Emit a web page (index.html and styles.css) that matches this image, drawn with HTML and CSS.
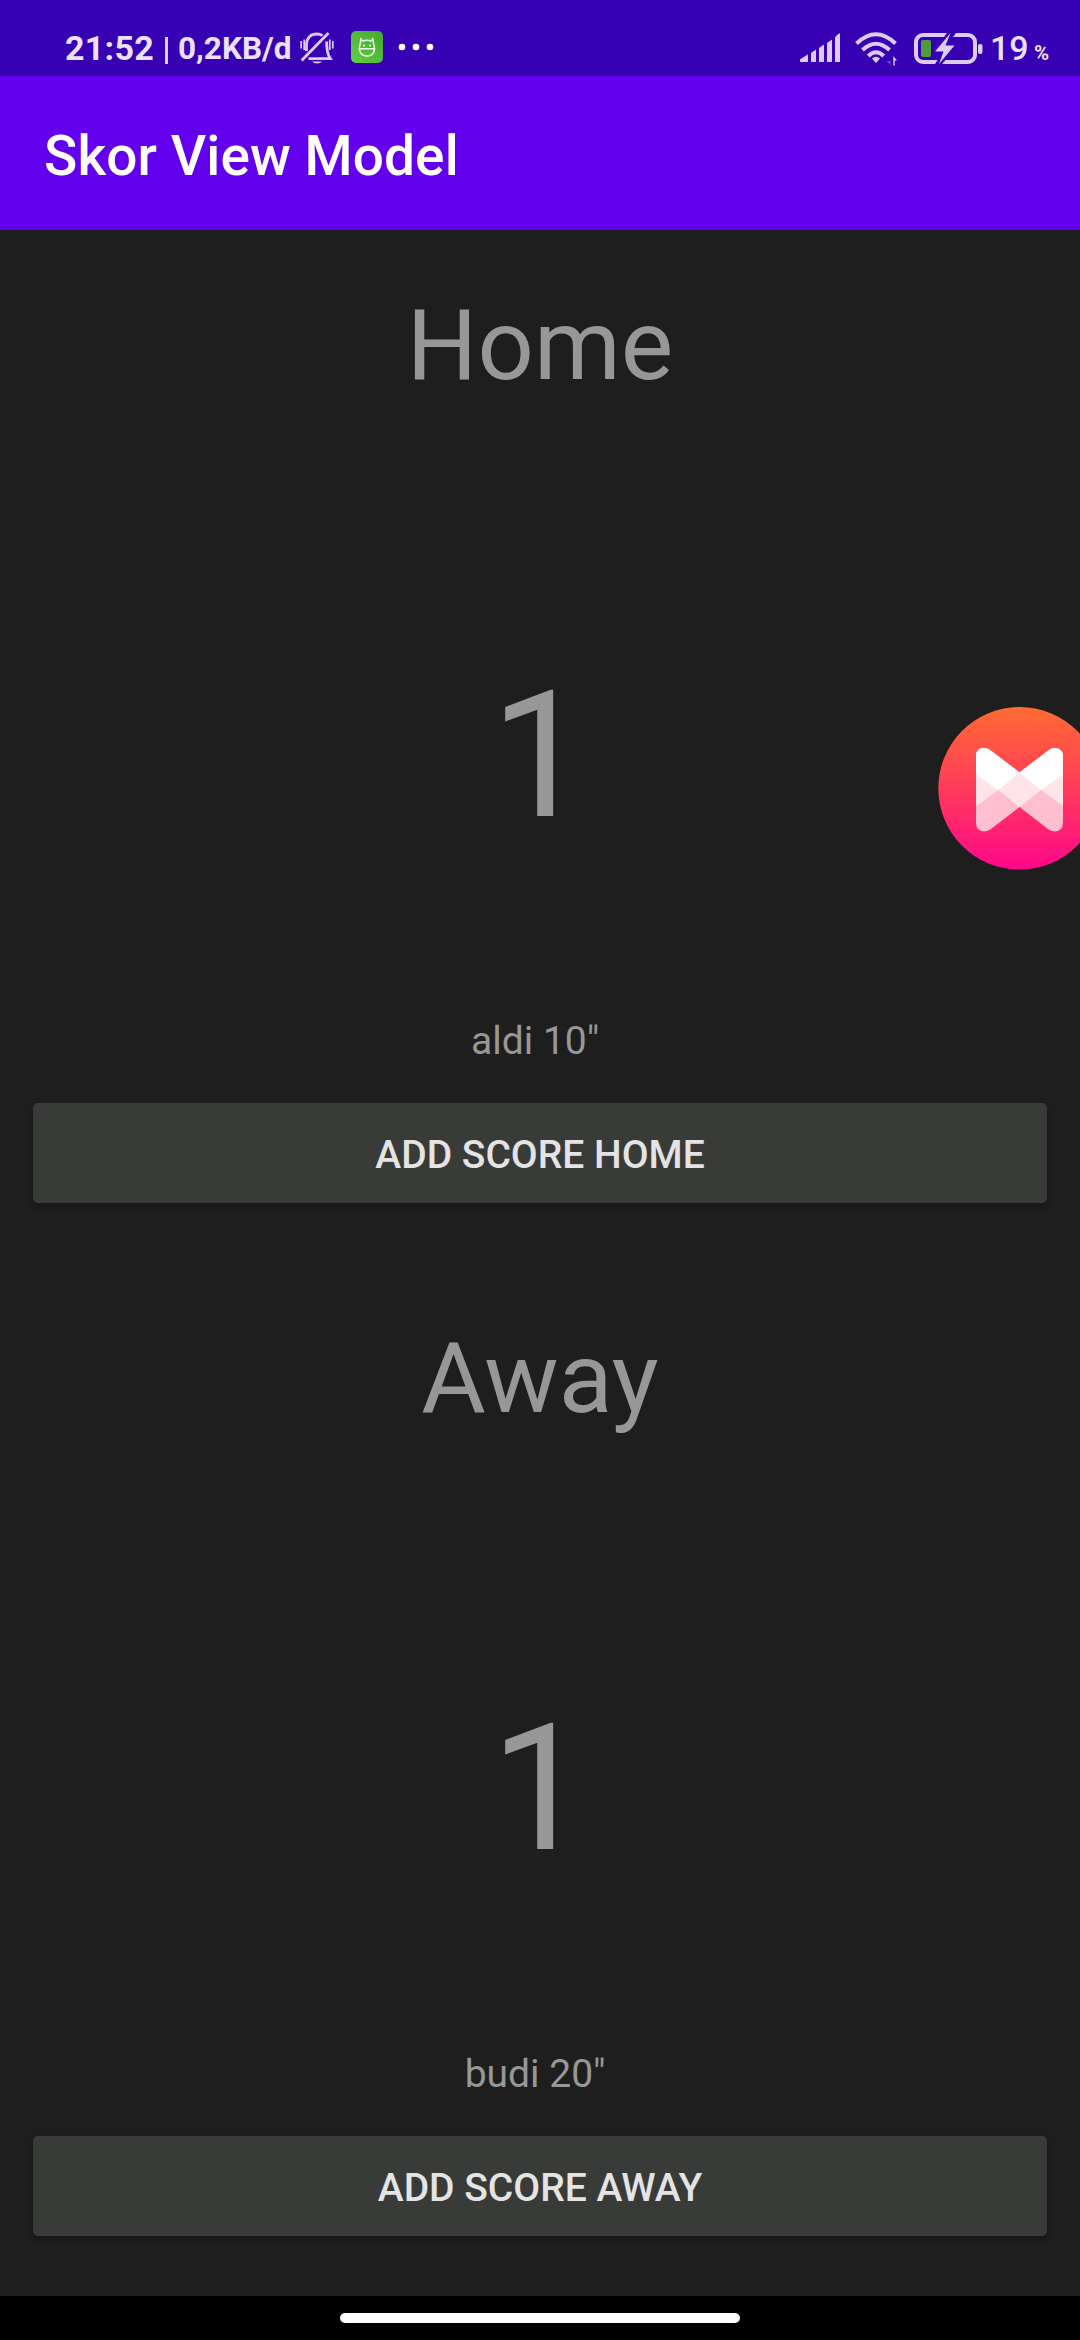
FILE: index.html
```html
<!DOCTYPE html>
<html lang="id">
<head>
<meta charset="utf-8">
<title>Skor View Model</title>
<link rel="stylesheet" href="styles.css">
</head>
<body>
<div class="screen">
  <header class="status">
    <div class="status-left">
      <span class="clock">21:52</span>
      <span class="divider"></span>
      <span class="speed">0,2KB/d</span>
      <svg class="bell" width="34" height="34" viewBox="0 0 34 34" fill="none" stroke="#dccdf8" stroke-width="2.8">
        <path d="M6.500 20V14C6.500 7 10.500 3 17 3c2.200 0 4 .6 5.500 1.700M26.600 10.500c.4 8.500.6 12.500 3.800 17.200H8.500"/>
        <path d="M1.600 29.500 28.500 2"/>
        <path d="M1.200 10v7.500M4.200 8.500v10.500M32.800 10v7.500M29.800 8.500v10.500" stroke-width="1.700"/>
        <path d="M12 30.500h10a5.500 3.300 0 0 1-10 0z" fill="#dccdf8" stroke="none"/>
      </svg>
      <svg class="pet" width="32" height="32" viewBox="0 0 32 32">
        <defs><linearGradient id="leaf" x1="0" y1="1" x2="1" y2="0"><stop offset="0" stop-color="#62ce49"/><stop offset="1" stop-color="#43a82c"/></linearGradient></defs>
        <rect width="32" height="32" rx="5" fill="url(#leaf)"/>
        <path d="M9.800 7.500 11.500 10.200Q16 8.300 20 10.200L21.800 7.500 22.600 13C25 20 22 25 16 25S7 20 9.200 13ZM7.500 17.700H24.300" fill="none" stroke="#effce9" stroke-width="1.400" stroke-linejoin="round"/>
        <circle cx="13" cy="14.500" r="1" fill="#fff"/><circle cx="19" cy="14.500" r="1" fill="#fff"/>
      </svg>
      <svg class="more" width="36" height="8" viewBox="0 0 36 8" fill="#fff"><circle cx="4" cy="4" r="3.300"/><circle cx="18" cy="4" r="3.300"/><circle cx="32" cy="4" r="3.300"/></svg>
    </div>
    <div class="status-right">
      <svg class="signal" width="40" height="30" viewBox="0 0 40 30" fill="#dccdf8">
        <path d="M0 29V26.500L8 21.300V29ZM11 29V20L16 16.500V29ZM19 29V15L24 11.500V29ZM27 29V10L32 6.500V29ZM35 29V4.500Q36.500 1.500 40 0V29Z"/>
      </svg>
      <svg class="wifi" width="44" height="34" viewBox="0 0 44 34" fill="none" stroke="#dccdf8" stroke-width="4">
        <path d="M1.500 11.500Q21 -7 40.500 11.500M7.500 18Q21 5.500 34.500 18M13.300 24Q21 16.500 28.700 24"/>
        <path d="M17 26.500Q21 22.800 25 26.500L21 31Z" fill="#dccdf8" stroke="none"/>
        <path d="M35.600 24v9.500L31.500 29h4" fill="#6b3fcb" stroke="none"/>
        <path d="M38.300 33.500V24L42 28.500h-2.300v5z" fill="#dccdf8" stroke="none"/>
      </svg>
      <svg class="battery" width="69" height="31" viewBox="0 0 69 31">
        <rect x="2" y="2" width="59" height="27" rx="7" fill="none" stroke="#dccdf8" stroke-width="4"/>
        <path d="M33 0H42L36 8H27ZM27 22H36L28 31H21Z" fill="#3700b3"/>
        <rect x="7" y="7" width="10" height="17" rx="2" fill="#4c9f38"/>
        <path d="M36.500 0 21 18.500H29.500L25 31 40.500 12.500H31.500Z" fill="#dccdf8"/>
        <rect x="64" y="11" width="4.500" height="10" rx="2" fill="#dccdf8"/>
      </svg>
      <span class="level">19</span><span class="percent">%</span>
    </div>
  </header>
  <div class="appbar"><h1 class="title">Skor View Model</h1></div>
  <main class="board">
    <section class="team">
      <h2 class="name">Home</h2>
      <div class="score">1</div>
      <p class="scorer">aldi 10"&nbsp;</p>
      <button class="add">ADD SCORE HOME</button>
    </section>
    <section class="team">
      <h2 class="name">Away</h2>
      <div class="score">1</div>
      <p class="scorer">budi 20"&nbsp;</p>
      <button class="add">ADD SCORE AWAY</button>
    </section>
  </main>
  <footer class="nav"><div class="handle"></div></footer>
  <svg class="bubble" width="142" height="166" viewBox="938 706 142 166">
    <defs>
      <linearGradient id="sunset" x1="0" y1="0" x2="0" y2="1"><stop offset="0" stop-color="#ff6b32"/><stop offset=".5" stop-color="#ff3b5b"/><stop offset="1" stop-color="#ff078b"/></linearGradient>
      <clipPath id="bow"><path d="M976 756Q976.500 748 984 748Q987 748 990 750L1019.500 772.500L1049 750Q1052 748 1055 748Q1062.500 748.500 1063 756V823Q1062.500 831 1055 831.500Q1051 831 1048 829L1019.500 807L991 829Q988 831 984 831.500Q976.500 831 976 823Z"/></clipPath>
    </defs>
    <circle cx="1019.600" cy="788.300" r="81.300" fill="url(#sunset)"/>
    <g clip-path="url(#bow)">
      <path d="M970 740H1070V840H970Z" fill="#ffbfd1"/>
      <path d="M970 740H1070V811L1041 790L1019.500 807L998 790L970 811Z" fill="#ffe5e9"/>
      <path d="M970 740H1070V770L1041 790L1019.500 772.500L998 790L970 770Z" fill="#fff"/>
    </g>
  </svg>
</div>
</body>
</html>
```
FILE: styles.css
```css
* { box-sizing: border-box; }
body { margin: 0; background: #1e1e1e; font-family: Roboto, "Noto Sans", sans-serif; }
.screen {
  position: relative;
  display: flex;
  flex-direction: column;
  width: 1080px;
  height: 2340px;
  overflow: hidden;
}
.status {
  display: flex;
  justify-content: space-between;
  height: 76px;
  padding: 0 30px 0 65px;
  background: #3700b3;
  color: #ebe1fc;
}
.status-left, .status-right { display: flex; align-items: flex-start; }
.clock { margin-top: 28px; width: 89px; font-size: 34px; line-height: 40px; font-weight: 700; letter-spacing: .3px; }
.divider { width: 3px; height: 27px; margin: 37px 0 0 11px; background: #dccdf8; }
.speed { width: 114px; margin: 27px 0 0 10px; font-size: 31.500px; line-height: 43px; font-weight: 700; white-space: nowrap; }
.bell { margin: 31px 0 0 8px; }
.pet { margin: 31px 0 0 17px; }
.more { margin: 43px 0 0 15px; }
.signal { margin-top: 33px; }
.wifi { margin: 32px 0 0 15px; }
.battery { margin: 33px 0 0 15px; }
.level { width: 40px; margin: 28px 0 0 7px; font-size: 34px; line-height: 40px; font-weight: 500; }
.percent { width: 16px; margin: 41px 0 0 4px; font-size: 20.500px; line-height: 25px; font-weight: 700; }
.appbar { display: flex; align-items: center; height: 154px; padding: 0 44px; background: #6200ee; }
.title { margin: 6px 0 0; font-size: 55px; line-height: 66px; font-weight: 500; letter-spacing: .08px; color: #fff; }
.board { display: flex; flex-direction: column; background: #1e1e1e; color: #979797; }
.team { display: flex; flex-direction: column; height: 1033px; padding: 49px 33px 0; text-align: center; }
.name { margin: 0; font-size: 99px; line-height: 132px; font-weight: 400; }
.score { margin-top: 245px; font-size: 176px; line-height: 200px; }
.scorer { margin: 162px 0 39px; font-size: 39px; line-height: 46px; }
.add {
  height: 100px;
  padding: 3px 0 0;
  border: 0;
  border-radius: 5px;
  background: #393b39;
  box-shadow: 0 4px 7px rgba(0, 0, 0, .25);
  color: #e4e4e4;
  font: 500 39px/46px Roboto, "Noto Sans", sans-serif;
}
.nav { display: flex; justify-content: center; height: 44px; padding-top: 17px; background: #000; }
.handle { width: 400px; height: 10px; border-radius: 5px; background: #fff; }
.bubble { position: absolute; top: 706px; right: 0; }
```
